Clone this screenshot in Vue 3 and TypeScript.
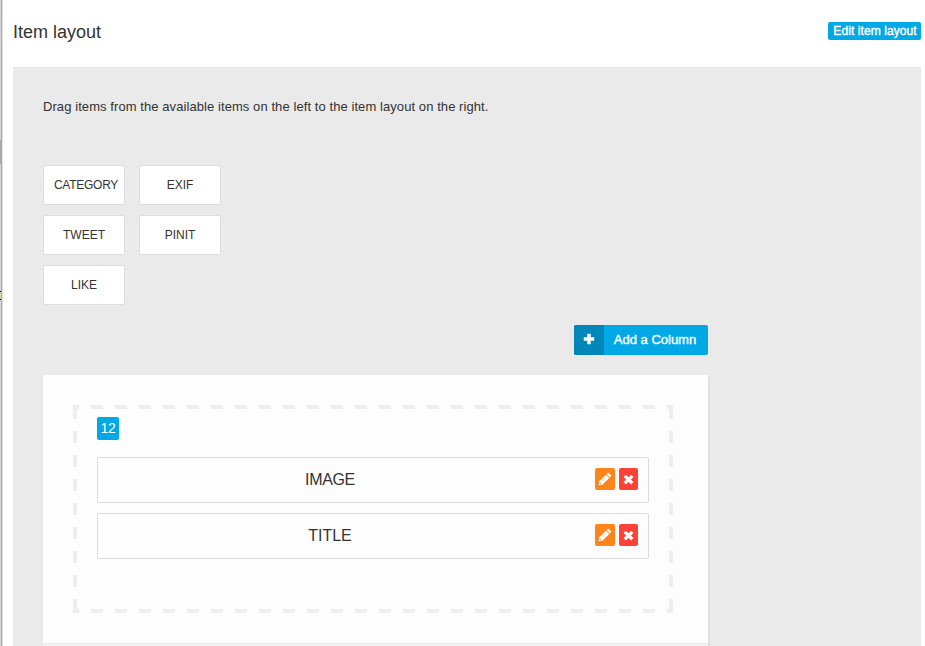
<script setup lang="ts">
interface LayoutItem {
  id: string
  label: string
}

const available: LayoutItem[] = [
  { id: 'category', label: 'CATEGORY' },
  { id: 'exif', label: 'EXIF' },
  { id: 'tweet', label: 'TWEET' },
  { id: 'pinit', label: 'PINIT' },
  { id: 'like', label: 'LIKE' },
]

const placed: LayoutItem[] = [
  { id: 'image', label: 'IMAGE' },
  { id: 'title', label: 'TITLE' },
]
</script>

<template>
  <div class="page">
    <div class="edge"><i class="thumb"></i><i class="marks"></i></div>
    <main class="main">
      <header class="head">
        <h1><span>Item layout</span></h1>
        <button class="edit-layout"><span>Edit item layout</span></button>
      </header>
      <section class="panel">
        <p class="hint"><span>Drag items from the available items on the left to the item layout on the right.</span></p>
        <div class="available">
          <div v-for="item in available" :key="item.id" class="chip" :class="item.id">
            <span>{{ item.label }}</span>
          </div>
        </div>
        <div class="toolbar">
          <button class="add">
            <span class="plus">
              <svg width="12" height="12" viewBox="0 0 12 12"><path d="M4.500 1h3v3.500H11v3H7.500V11h-3V7.500H1v-3h3.500z" fill="#fff" stroke="#fff" stroke-width=".5" stroke-linejoin="round" /></svg>
            </span>
            <span class="add-label"><span>Add a Column</span></span>
          </button>
        </div>
        <div class="canvas">
          <div class="column">
            <span class="size">12</span>
            <div v-for="item in placed" :key="item.id" class="row">
              <span class="name" :class="item.id"><span>{{ item.label }}</span></span>
              <button class="tool pencil">
                <svg width="14" height="14" viewBox="0 0 14 14">
                  <path d="M.6 13.300 1.300 9.300 7.900 2.700 11.200 6 4.600 12.600z" fill="#fff" />
                  <path d="M8.500 2.100 9.600 1q.7-.6 1.400 0L12.900 2.900q.6.700 0 1.400L11.800 5.400z" fill="#fff" />
                  <path d="M1.900 10.700 3.200 12" stroke="#ff851b" stroke-width="1" fill="none" />
                  <path d="M4 9.400 8 5.400" stroke="#ffc28d" stroke-width=".6" fill="none" />
                </svg>
              </button>
              <button class="tool remove">
                <svg width="11" height="11" viewBox="0 0 11 11"><path d="M1.700 1.900 9.300 9.300M9.300 1.900 1.700 9.300" stroke="#fff" stroke-width="3.300" /></svg>
              </button>
            </div>
          </div>
          <div class="canvas-foot"></div>
        </div>
      </section>
    </main>
  </div>
</template>

<style>
body {
  margin: 0;
  overflow: hidden;
}
</style>

<style scoped>
* {
  box-sizing: border-box;
}
.page {
  display: flex;
  width: 925px;
  height: 646px;
  overflow: hidden;
  background: #fff;
  color: #333;
  font-family: "Liberation Sans", Arial, sans-serif;
  font-size: 13px;
}
button {
  border: 0;
  padding: 0;
  margin: 0;
  color: #fff;
  font-family: inherit;
}
svg {
  display: block;
}
.edge {
  flex: none;
  width: 3px;
  height: 646px;
  padding-top: 140px;
  background: linear-gradient(90deg, #d6d6d6 0 1px, #7fb6dc 1px 2px, #dce3e8 2px 3px);
}
.thumb {
  display: block;
  width: 1px;
  height: 24px;
  background: #aaa;
}
.marks {
  display: block;
  width: 1px;
  height: 9px;
  margin-top: 127px;
  border: solid #000;
  border-width: 1px 0;
  background: #d8d8a8;
}
.main {
  width: 918px;
  padding-left: 10px;
}
.head {
  display: flex;
  justify-content: space-between;
  height: 67px;
}
h1 {
  margin: 21px 0 0;
  font-size: 18px;
  font-weight: 400;
  line-height: 22px;
}
.edit-layout {
  width: 93px;
  height: 18px;
  margin-top: 22px;
  padding-left: 1px;
  border-radius: 2px;
  background: #00a8e6;
  font-size: 12px;
  line-height: 18px;
  white-space: nowrap;
  letter-spacing: 0.08px;
  -webkit-text-stroke: 0.4px #fff;
}
.panel {
  width: 908px;
  height: 579px;
  padding: 30px 0 0 30px;
  border-top: 1px solid #e5e5e5;
  background: #eaeaea;
}
.hint {
  margin: 0;
  height: 67px;
  line-height: 18px;
  white-space: nowrap;
  letter-spacing: 0.077px;
}
.available {
  display: grid;
  grid-template-columns: 82px 82px;
  grid-auto-rows: 40px;
  gap: 10px 14px;
}
.chip {
  display: flex;
  justify-content: center;
  border: 1px solid #ddd;
  border-radius: 2px;
  background: #fff;
  font-size: 12px;
  line-height: 38px;
}
.category {
  padding-left: 4px;
  letter-spacing: -0.25px;
}
.toolbar {
  display: flex;
  justify-content: flex-end;
  width: 665px;
  margin-top: 20px;
}
.add {
  display: flex;
  width: 134px;
  height: 30px;
  border-radius: 2px;
  overflow: hidden;
  background: #00a8e6;
  font-size: 13px;
  line-height: 29px;
}
.plus {
  display: flex;
  align-items: center;
  justify-content: center;
  width: 30px;
  height: 30px;
  padding-bottom: 2px;
  background: #0087ba;
}
.add-label {
  flex: 1;
  padding-right: 2px;
  white-space: nowrap;
  letter-spacing: 0;
  -webkit-text-stroke: 0.4px #fff;
}
.canvas {
  width: 665px;
  height: 290px;
  margin-top: 20px;
  padding-top: 30px;
  background: #fdfdfd;
  box-shadow: 2px 2px 0 #dfdfdf;
}
.column {
  width: 600px;
  height: 208px;
  margin-left: 30px;
  padding: 12px 24px 0;
  --dash-x: repeating-linear-gradient(90deg, #eee 0 6px, transparent 6px 18px, #eee 18px 24px);
  --dash-y: repeating-linear-gradient(180deg, transparent 0 2px, #eee 2px 14px, transparent 14px 24px);
  background:
    var(--dash-x) 0 0 / 100% 4px no-repeat,
    var(--dash-x) 0 100% / 100% 4px no-repeat,
    var(--dash-y) 0 0 / 4px 100% no-repeat,
    var(--dash-y) 100% 0 / 4px 100% no-repeat;
}
.size {
  display: block;
  width: 22px;
  height: 23px;
  margin-bottom: 17px;
  border-radius: 2px;
  background: #00a8e6;
  color: #fff;
  font-size: 14px;
  line-height: 23px;
  letter-spacing: -0.4px;
  text-align: center;
}
.row {
  display: flex;
  align-items: flex-start;
  width: 552px;
  height: 46px;
  margin-bottom: 10px;
  padding-top: 10px;
  border: 1px solid #ddd;
  border-radius: 2px;
}
.name {
  width: 464px;
  margin-right: 33px;
  font-size: 16px;
  line-height: 24px;
  text-align: center;
}
.name.image {
  letter-spacing: -0.35px;
}
.tool {
  display: flex;
  align-items: center;
  justify-content: center;
  height: 22px;
  border-radius: 2px;
}
.pencil {
  width: 20px;
  margin-right: 4px;
  background: #ff851b;
}
.remove {
  width: 19px;
  padding-top: 1px;
  background: #ff4136;
}
.canvas-foot {
  height: 30px;
  margin-top: 30px;
  border-top: 1px solid #e9e9e9;
  background: #f2f2f2;
}
</style>
